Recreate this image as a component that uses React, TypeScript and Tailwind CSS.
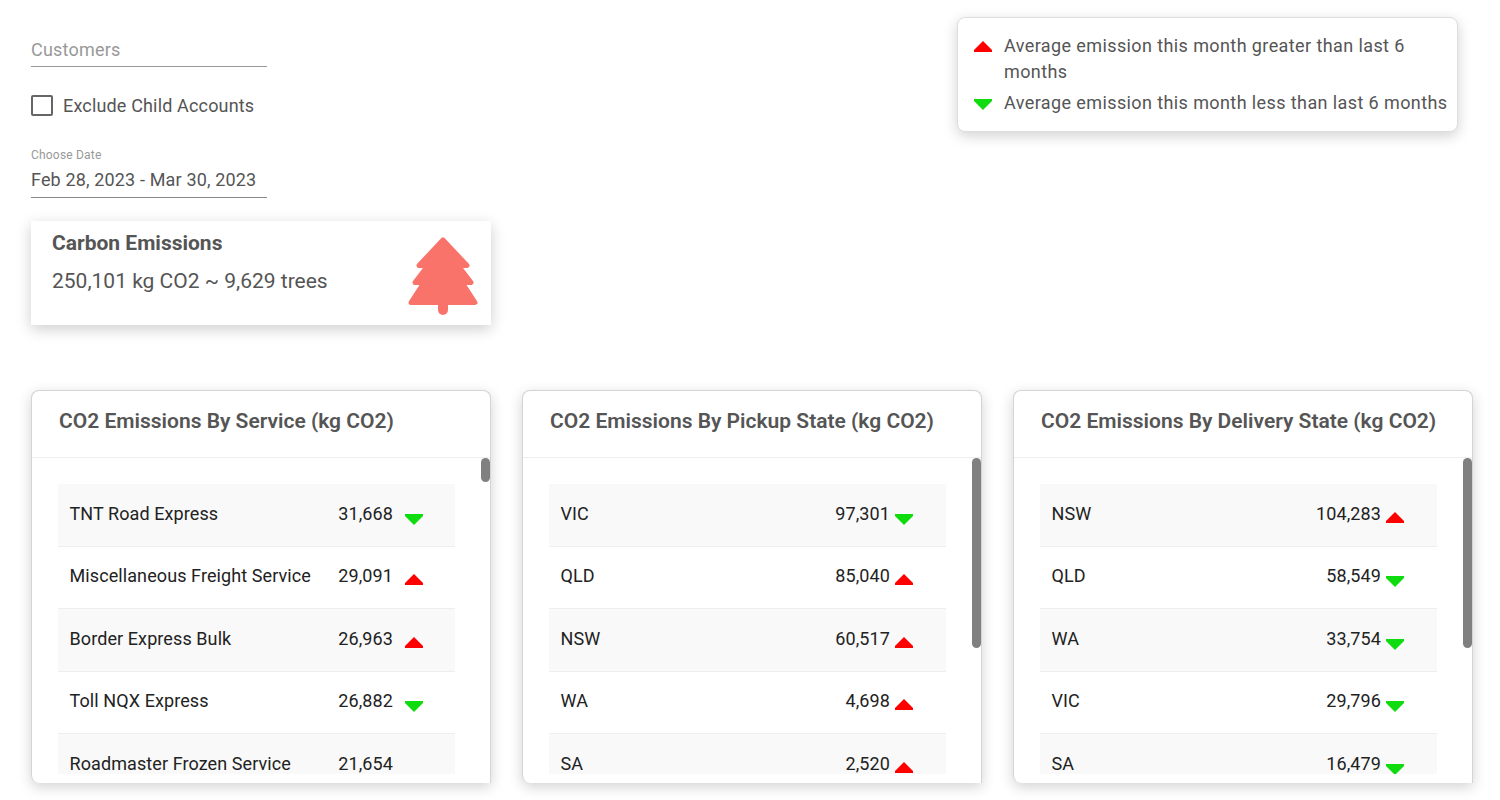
const font = { fontFamily: 'Roboto, sans-serif' };

function Arrow({ up }: { up: boolean }) {
  return (
    <svg width="18" height="11" viewBox="0 0 18 11" className={up ? 'mt-[8px] shrink-0' : 'mt-[9px] shrink-0'}>
      {up ? (
        <path d="M9 0 L14 5 L18 9 V11 H0 V9 L4 5 Z" fill="#ff0000" />
      ) : (
        <path d="M0 0 H18 V2 L9 11 L0 2 Z" fill="#0fdc0f" />
      )}
    </svg>
  );
}

type Row = { name: string; value: string; up?: boolean };

const cards: { title: string; gap: string; pr: string; thumb: string; rows: Row[] }[] = [
  {
    title: 'CO2 Emissions By Service (kg CO2)',
    gap: 'gap-[12px]',
    pr: 'pr-[32px]',
    thumb: 'h-[24px]',
    rows: [
      { name: 'TNT Road Express', value: '31,668', up: false },
      { name: 'Miscellaneous Freight Service', value: '29,091', up: true },
      { name: 'Border Express Bulk', value: '26,963', up: true },
      { name: 'Toll NQX Express', value: '26,882', up: false },
      { name: 'Roadmaster Frozen Service', value: '21,654' },
    ],
  },
  {
    title: 'CO2 Emissions By Pickup State (kg CO2)',
    gap: 'gap-[5px]',
    pr: 'pr-[33px]',
    thumb: 'h-[190px]',
    rows: [
      { name: 'VIC', value: '97,301', up: false },
      { name: 'QLD', value: '85,040', up: true },
      { name: 'NSW', value: '60,517', up: true },
      { name: 'WA', value: '4,698', up: true },
      { name: 'SA', value: '2,520', up: true },
    ],
  },
  {
    title: 'CO2 Emissions By Delivery State (kg CO2)',
    gap: 'gap-[5px]',
    pr: 'pr-[33px]',
    thumb: 'h-[190px]',
    rows: [
      { name: 'NSW', value: '104,283', up: true },
      { name: 'QLD', value: '58,549', up: false },
      { name: 'WA', value: '33,754', up: false },
      { name: 'VIC', value: '29,796', up: false },
      { name: 'SA', value: '16,479', up: false },
    ],
  },
];

function Tree() {
  return (
    <svg width="72" height="82" viewBox="0 0 72 82" className="shrink-0">
      <path
        d="M36 5 L60 30.5 H51 L64 47.5 H55 L68 67.5 H4 L17 47.5 H8 L21 30.5 H12 Z"
        fill="#f9736b"
        stroke="#f9736b"
        strokeWidth="5"
        strokeLinejoin="round"
      />
      <path d="M36 66 V75" stroke="#f9736b" strokeWidth="10" strokeLinecap="round" />
    </svg>
  );
}

function DataCard({ card }: { card: (typeof cards)[number] }) {
  return (
    <div className="relative h-[393px] w-[460px] rounded-t-lg rounded-bl-lg border border-[#d4d4d4] border-b-0 bg-white shadow-[0_4px_14px_rgba(0,0,0,0.18)]">
      <div className="flex h-[67px] items-start border-b border-[#eeeeee] pl-[27px] pt-[16px]">
        <h2 className="text-[21px] font-semibold leading-[28px] text-[#555555]">{card.title}</h2>
      </div>
      <div className="h-[316px] overflow-hidden pl-[26px] pr-[35px] pt-[26px]">
        {card.rows.map((r, i) => (
          <div
            key={r.name}
            className={`flex h-[62.5px] items-center justify-between border-b border-[#eeeeee] pb-[2px] pl-[11.5px] text-[#222222] ${card.pr} ${i % 2 === 0 ? 'bg-[#f9f9f9]' : 'bg-white'}`}
          >
            <span className="text-[18px] leading-[24px] tracking-[0.09px]">{r.name}</span>
            <span className={`flex items-start ${card.gap}`}>
              <span className="text-[18px] leading-[24px] tracking-[0.1px]">{r.value}</span>
              {r.up === undefined ? (
                <span className="w-[18px]" />
              ) : (
                <span className={r.up ? 'pt-[2px]' : 'pt-[3px]'}>
                  <Arrow up={r.up} />
                </span>
              )}
            </span>
          </div>
        ))}
      </div>
      <div className={`absolute right-0 top-[67px] w-[9px] rounded-full bg-[#808080] ${card.thumb}`} />
    </div>
  );
}

export default function App() {
  return (
    <div className="h-[800px] overflow-hidden bg-white" style={font}>
      <div className="flex justify-between pl-[31px] pr-[42px] pt-[17px]">
        <div className="w-[460px]">
          <div className="w-[236px]">
            <div className="flex h-[50px] items-end border-b border-[#999999] pb-[4px] text-[18px] leading-[24px] tracking-[0.2px] text-[#999999]">
              Customers
            </div>
            <label className="mt-[25px] flex items-center gap-[10px]">
              <span className="h-[21px] w-[22px] rounded-[2px] border-2 border-[#666666]" />
              <span className="pt-[2px] text-[18px] leading-[24px] tracking-[0.16px] text-[#555555]">Exclude Child Accounts</span>
            </label>
            <div className="mt-[29px] text-[12px] leading-[16px] tracking-[0.2px] text-[#999999]">Choose Date</div>
            <div className="mt-[5px] border-b border-[#888888] pb-[5px] text-[18px] leading-[24px] tracking-[0.15px] text-[#555555]">
              Feb 28, 2023 - Mar 30, 2023
            </div>
          </div>
          <div className="mt-[23px] flex h-[104px] items-start justify-between bg-white pl-[21px] pr-[12px] pt-[10px] shadow-[0_4px_14px_rgba(0,0,0,0.2)]">
            <div>
              <div className="text-[21px] font-bold leading-[24px] text-[#555555]">Carbon Emissions</div>
              <div className="mt-[13px] text-[21px] leading-[26px] text-[#555555]">250,101 kg CO2 ~ 9,629 trees</div>
            </div>
            <div className="mt-[4px]">
              <Tree />
            </div>
          </div>
        </div>
        <div className="h-[115px] w-[501px] rounded-lg border border-[#dddddd] bg-white pl-[16px] pr-[8px] pt-[15px] text-[18px] leading-[26px] tracking-[0.4px] text-[#555555] shadow-[0_4px_14px_rgba(0,0,0,0.18)]">
          <div className="flex items-start gap-[12px]">
            <Arrow up />
            <span>Average emission this month greater than last 6 months</span>
          </div>
          <div className="mt-[5px] flex items-start gap-[12px]">
            <Arrow up={false} />
            <span>Average emission this month less than last 6 months</span>
          </div>
        </div>
      </div>
      <div className="mt-[65px] flex gap-[31px] pl-[31px]">
        {cards.map((c) => (
          <DataCard key={c.title} card={c} />
        ))}
      </div>
    </div>
  );
}
